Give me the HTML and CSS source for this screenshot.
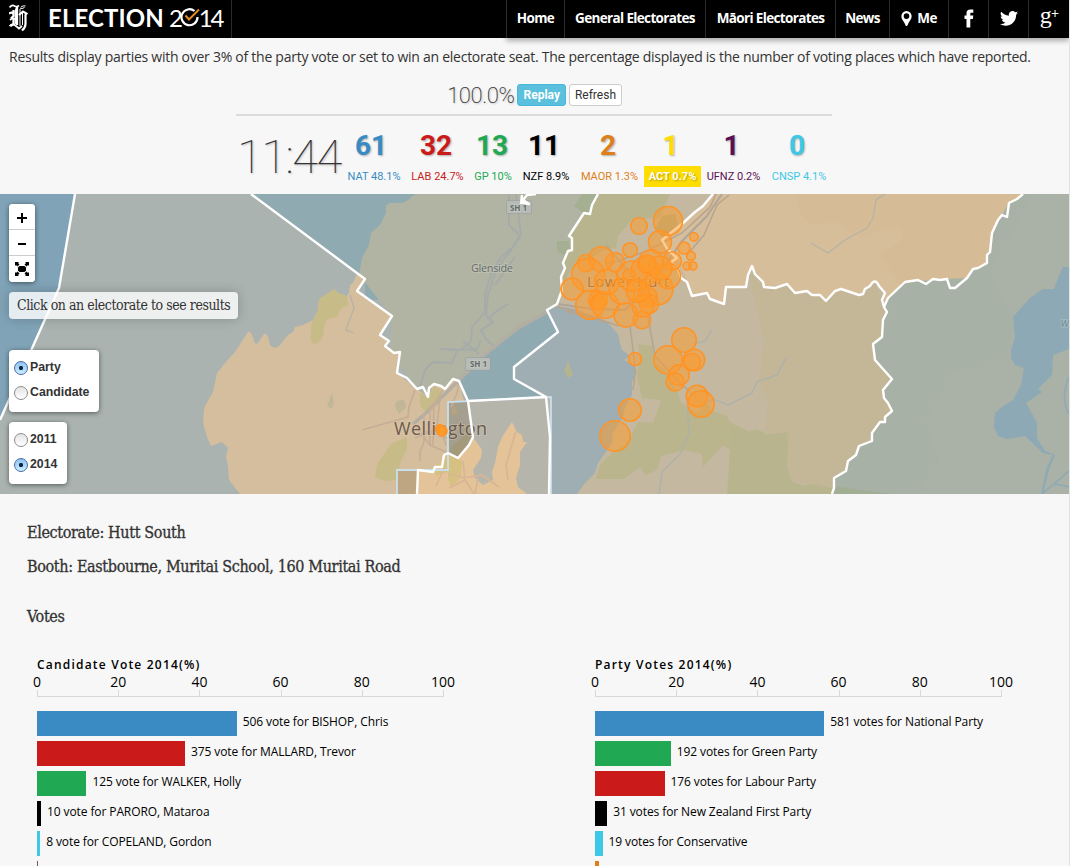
FILE: index.html
```html
<!DOCTYPE html>
<html lang="en">
<head>
<meta charset="utf-8">
<title>Election 2014</title>
<link rel="stylesheet" href="styles.css">
</head>
<body>
<div class="page">
  <header class="topbar">
    <a class="logo">
      <svg width="20" height="28" viewBox="0 0 20 28" fill="none" stroke="#fff">
        <path d="M0.500 3.500 Q3 .5 5.500 2 Q8 3.500 10 1.500 M9.500 1.500 Q6 5 6.500 10 V20" stroke-width="1.700"/>
        <path d="M8 3 V21 M4.500 6 V12 L2 14.500 M0 9.500 Q3 7.500 4.500 10 M4.500 15 V20 L1.500 22" stroke-width="2.300"/>
        <path d="M1 16 Q3.500 13.500 6 15 M.5 22 Q4 19 7 22 L10 24.500 L13 22" stroke-width="1.800"/>
        <path d="M10 11 L14 7.500 L17.500 9.500 L16.500 11 V20 Q16.500 23.500 13 26.500" stroke-width="2.200"/>
        <path d="M11 5 V22 M12 3 Q14 1.200 16.500 2 M11 4 Q12.500 5.500 15.500 3.500 M13.500 9 V21" stroke-width="1"/>
      </svg>
    </a>
    <a class="brand"><span class="brand-word">ELECTION</span><span class="brand-year">2<svg width="21" height="22" viewBox="0 0 21 22" fill="none"><path d="M14.500 4 A8 8 0 1 0 17.500 10" stroke="#fff" stroke-width="2.200"/><path d="M5.500 8.500 L9 12.500 L19 2.500" stroke="#e58a24" stroke-width="2"/></svg>14</span></a>
    <nav class="nav">
      <a class="n-home">Home</a>
      <a class="n-general">General Electorates</a>
      <a class="n-maori">Māori Electorates</a>
      <a class="n-news">News</a>
      <a class="n-me"><svg width="11" height="15" viewBox="0 0 10 14"><path fill="#fff" fill-rule="evenodd" d="M5 0a4.800 4.800 0 0 0-4.800 4.800C.2 7 1.600 8.600 3 11l1.400 3h1.200L7 11c1.400-2.400 2.800-4 2.800-6.200A4.800 4.800 0 0 0 5 0zm0 2.200a2.600 2.600 0 1 1 0 5.200 2.600 2.600 0 0 1 0-5.200z"/></svg>Me</a>
      <a class="n-fb"><svg width="10" height="19" viewBox="0 0 10 19"><path fill="#fff" d="M2.500 18.500V10H.5V6.600h2V4.300C2.500 1.700 3.800.5 6.300.5H9.300v3.300H7.500c-.9 0-1.200.4-1.200 1.200v1.600h3L8.900 10H6.300v8.500z"/></svg></a>
      <a class="n-tw"><svg width="18" height="15" viewBox="0 0 24 20"><path fill="#fff" d="M24 2.400c-.9.400-1.800.7-2.800.8 1-.6 1.800-1.600 2.200-2.700-1 .6-2 1-3.100 1.200A4.900 4.900 0 0 0 11.900 6.200C7.800 6 4.200 4 1.700.9A4.900 4.900 0 0 0 3.200 7.500c-.8 0-1.600-.2-2.200-.6v.1c0 2.400 1.700 4.400 3.900 4.800-.7.200-1.500.2-2.200.1.600 2 2.400 3.400 4.600 3.400A9.900 9.900 0 0 1 0 17.300 14 14 0 0 0 7.500 19.500c9.100 0 14-7.500 14-14v-.6c1-.7 1.800-1.600 2.500-2.500z"/></svg></a>
      <a class="n-gp"><span class="g">g</span><span class="plus">+</span></a>
    </nav>
  </header>

  <p class="intro">Results display parties with over 3% of the party vote or set to win an electorate seat. The percentage displayed is the number of voting places which have reported.</p>

  <section class="summary">
    <div class="progress">
      <span class="percent">100.0%</span>
      <button class="btn primary">Replay</button>
      <button class="btn">Refresh</button>
    </div>
    <div class="results">
      <div class="clock">11:44</div>
      <div class="party nat"><b>61</b><span>NAT 48.1%</span></div>
      <div class="party lab"><b>32</b><span>LAB 24.7%</span></div>
      <div class="party gp"><b>13</b><span>GP 10%</span></div>
      <div class="party nzf"><b>11</b><span>NZF 8.9%</span></div>
      <div class="party maor"><b>2</b><span>MAOR 1.3%</span></div>
      <div class="party act"><b>1</b><span>ACT 0.7%</span></div>
      <div class="party ufnz"><b>1</b><span>UFNZ 0.2%</span></div>
      <div class="party cnsp"><b>0</b><span>CNSP 4.1%</span></div>
    </div>
  </section>

  <section class="map">
    <svg class="map-canvas" width="1069" height="300" viewBox="0 194 1069 300">
      <rect y="194" width="1069" height="300" fill="#aab3b0"/>
      <!-- open sea -->
      <path fill="#80a3b7" d="M0 194H75L59 288L0 420Z"/>
      <path fill="#90aab2" d="M251 194H420V300H365L365 279Z"/>
      <!-- northern suburbs -->
      <path fill="#b1b3a3" d="M359 275L362 258L369 245L371 233L380 225L386 213L386 206Q388 202 397 203T412 196L416 194H600V310L547 310L460 382L453 395L420 395L390 350L392 316Z"/>
      <!-- Wellington west -->
      <path fill="#d4be9e" d="M357 273L353 283L350 285L349 293L347 296L338 293L334 289L328 294L319 299L318 310L313 320L303 325L295 327L293 332L288 335L280 345Q275 350 270 345L268 337Q265 330 262 337L258 343Q255 345 254 341L252 335Q249 328 246 335L235 352L225 363L217 373L213 392L204 408L203 423L207 437L211 446L222 442L228 448L226 457L228 465L229 480L240 494H460L473 437L459 381L453 379L445 389L434 384L428 397L417 389L397 373L400 352L394 353L385 346L389 341L380 335L392 316L357 291L365 279Z"/>
      <path fill="#c7bb88" d="M334 289L338 293L347 296L348 306L341 308L337 317L328 319Q323 324 324 333Q320 344 314 344Q309 341 311 333V325L318 310L319 299Z"/>
      <path fill="#c7bb88" d="M391 444L407 437V449L401 461L396 480L386 481L375 477L377 464Z"/>
      <path fill="#c7bb88" d="M420 393L428 397L434 386L443 391L434 404L425 412L420 405Z"/>
      <path fill="#c1b798" d="M332 393L334 402L332 409L327 406ZM396 402Q406 395 406 407L399 414L395 406Z"/>
      <!-- harbour -->
      <path fill="#90aab2" d="M459 381L465 372L495 348L518 327L547 310L558 332L514 367V379L547 397L468 401Z"/>
      <path fill="#c4b8a0" d="M557 304L562 290L561 277L565 268L563 263L568 251L572 250L569 236L584 213L590 214L592 205L598 194H890V494H551V397L514 379V367L558 332L547 310Z"/>
      <!-- Belmont hills -->
      <path fill="#b8b58e" d="M598 194H670L660 218L632 219L625 228L618 235L616 248L604 250L588 260L575 262L564 283L561 277L565 268L563 263L568 251L572 250L569 236L584 213L590 214L592 205Z"/>
      <path fill="#a5af92" d="M582 194H597L591 212L584 213L574 206ZM557 241H569L571 251L567 252L563 255L557 251ZM662 216L675 214L681 235L665 239L655 230ZM680 222L694 219L693 230L684 234Z"/>
      <path fill="#9faeb2" d="M514 367L558 332L547 310L557 306L575 309L597 318L608 323L618 334L620 343L622 350L630 356L624 360L634 365L637 372L632 382V395L625 407L623 417L613 433L612 443L605 453L598 463L595 473L585 483L577 494H549L551 397L514 379Z"/>
      <path fill="#b5b48f" d="M568 361L573 375L568 378L564 371Z"/>
      <!-- eastern hills -->
      <path fill="#bab58c" d="M638 344L652 346L655 362L666 371L677 391L681 403L698 413L706 400L711 410L727 416L730 422L750 432L766 435L790 432L787 470L794 484L804 487L835 490L832 494H752L729 485L730 450L723 445L703 467L702 454L685 450L661 456L657 470L645 475L640 467L624 479H596L600 465L613 452L628 442L638 422L653 423L661 400L642 398L637 375L640 360Z"/>
      <path fill="#b8b58e" d="M730 424L747 433Q756 425 766 435L790 432L786 455L790 481L804 486L815 483L835 489L832 494H727L730 450Z"/>
      <!-- Upper Hutt -->
      <path fill="#d7be9b" d="M713 194L703 206L683 223L662 240L668 250L677 258L687 282L692 296L707 293L710 299L724 304L726 287H746L752 266L763 282L764 287L775 288L787 284L795 293L807 291L820 295L826 301L835 291L841 289L859 295L865 289L875 282L885 293L884 307L888 298L905 282L918 280L926 284L933 279H947L950 288H955L967 278L973 269L987 263V255L990 252L992 233L998 220L1009 203L1023 194Z"/>
      <path fill="#d5bc93" d="M795 194H1021L1008 203L1004 216L995 225L990 253L981 266L970 272L952 288L920 280L900 286L880 255L904 239L898 225L860 238L835 222L810 225L798 210Z" opacity=".65"/>
      <path fill="#c3b795" d="M748 270L763 287L787 284L795 293L820 295L826 301L841 289L863 294L875 282L884 307L882 337L875 350L890 379L892 411L872 433L846 471L834 488L804 484L790 480L787 432L765 434L768 404L759 383L764 340L757 310Z" opacity=".75"/>
      <!-- Wairarapa -->
      <path fill="#a8b1a6" d="M1023 194H1069V494H832L834 478L846 471L848 461L856 455L859 446L872 441V433L880 422H885V417L892 411L884 398L883 390L892 379L875 360L873 344L882 337L883 320L887 312L884 307L888 298L905 282L947 279L967 278L987 263L992 233L1009 203Z"/>
      <path fill="#abb0a8" d="M1030 194H1069V494H918L938 460L925 420L955 370L1005 365L1015 320L990 270L1015 230Z" opacity=".7"/>
      <path fill="#a1ae94" d="M833 486L892 494H832Z"/>
      <path fill="#8ca9b5" d="M1069 267H1063L1058 278L1054 289H1043L1030 298L1013 317L1015 338L1011 350V358L1015 365L1024 368L1021 385L1013 400L1002 407L995 413L994 427L998 436L1007 439L1025 436L1043 453L1053 455L1047 467L1041 494H1043L1049 469L1055 455L1045 451L1037 438V423L1026 403L1042 392L1038 389L1052 375L1053 355L1069 349Z"/>
      <path d="M1069 471L1042 494M1069 377Q1060 398 1069 414M1055 484L1069 487" stroke="#8ca9b5" stroke-width="1.500" fill="none"/>
      <!-- south Wellington -->
      <path fill="#b5b5ac" d="M468 401L546 397L550 437V494H470Z"/>
      <path fill="#b9b9b4" d="M546 397L551 397V494H549L550 437Z"/>
      <path fill="#e3c397" d="M417 470L433 472L442 467L444 455L458 458L473 437L482 450L481 458L473 470L475 478L483 485L493 480L492 472L495 463L498 447L502 437L512 422L517 432L522 435L523 442L527 442L520 452V465L516 478L518 487L527 494H417Z"/>
      <path fill="#d6c183" d="M448 455L462 461L461 476L452 488L448 480V472L436 476L433 468Z"/>
      <path fill="#a59f8f" d="M448 402L468 401L473 437L469 445L458 458L448 453Z"/>
      <path fill="#a49a7b" d="M467 434L472 437L458 458L449 454L452 446Z"/>
      <path fill="#b6a180" d="M453 401L458 414L451 415Z"/>
      <path fill="#bea682" d="M397 470H418L417 494H397Z"/>
      <!-- highways and streams -->
      <g fill="none" stroke="#a5abaa" stroke-width="1.800">
        <path d="M509 194V225L520 236L512 248L501 257L491 274L485 295V312L472 327L471 341L461 350L440 349"/>
        <path d="M516 194L521 235L511 250L496 270L488 295L486 315L493 322L481 330L486 339L496 349"/>
        <path d="M515 257L495 285M508 304L497 311L487 319M481 340L477 349L457 350L452 363L433 362M463 341L479 354M420 386L425 370L433 362"/>
      </g>
      <path d="M547 312L518 328L490 350L459 380L426 413L413 424" fill="none" stroke="#b3aea3" stroke-width="3.500"/>
      <path d="M443 390L431 410M415 390L409 407L408 417L362 430M424 413V442L420 452V461M434 402L433 445M459 382L457 393L451 407M413 423L430 445L448 453M430 405V446M440 397L436 435M415 438L440 428L446 445M424 431L447 438" fill="none" stroke="#c7ad96" stroke-width="1.700"/>
      <path d="M448 474L464 478L482 475L499 487M463 461L465 480L474 494M449 488L465 480M478 478L475 494M444 468L436 486M516 431L506 465L508 480" fill="none" stroke="#d8b595" stroke-width="1.700"/>
      <path d="M558 304L593 309L625 310L655 280L682 241L706 217L722 194" fill="none" stroke="#afa59a" stroke-width="2"/>
      <path d="M558 307L594 317L618 326M605 265L645 252L682 233L710 207L716 194M687 255L704 235L717 205L729 195M630 326L634 358L635 373L633 390M648 317L655 356L680 383L696 397M566 311L613 324M606 245L640 285" fill="none" stroke="#b7a48f" stroke-width="1.500"/>
      <path d="M712 330L705 341L694 344M786 358L777 375L757 382L752 393L728 405L716 400L704 402M687 400L689 434L681 453L662 472L659 494" fill="none" stroke="#a9b0af" stroke-width="1.200"/>
      <path d="M885 194L876 200L873 218L867 228L845 240L828 253L811 243M350 295L354 308L346 330L354 333" fill="none" stroke="#b7b2a5" stroke-width="1.300"/>
      <!-- place names -->
      <g class="place">
        <text x="471" y="272" font-size="11" textLength="42">Glenside</text>
        <rect x="507" y="201" width="24" height="12" class="shield"/><text x="510" y="211" font-size="8" font-weight="bold" textLength="17">SH 1</text>
        <rect x="466" y="358" width="24" height="12" class="shield"/><text x="470" y="367" font-size="8" font-weight="bold" textLength="17">SH 1</text>
        <text x="394" y="435" font-size="18" textLength="93" class="city">Wellington</text>
        <text x="587" y="287" font-size="15" textLength="82" class="town">Lower Hutt</text>
        <text x="1060.500" y="327" font-size="9.500" font-style="italic" fill="#628ca3">W</text>
      </g>
      <!-- electorate boundaries -->
      <g class="edge-blue">
        <path d="M397 494V470H448V402L551 397V494"/>
      </g>
      <g class="edge">
        <path d="M75 194L59 288L0 420"/>
        <path d="M251 194L365 279L357 291L392 316L380 335L389 341L385 346L394 353L400 352L397 373L407 378L417 389L423 387L428 397L429 388L434 384L441 386L445 389L453 379L459 381L468 401L473 437L469 445L458 458L448 453L444 455L442 467H435L433 472L418 470L417 494"/>
        <path d="M468 401L546 397L514 379V367L558 332L547 310L557 304L562 290L561 277L565 268L563 263L568 251L572 250V238L569 236L584 213L590 214L592 205L598 194"/>
        <path d="M546 397L550 437L549 494M520 202L529 204L523 200L527 195L536 194M521 204L522 195"/>
        <path d="M713 194L703 206L695 212L683 223L662 240L668 250M668 250L677 258L670 263L678 268L681 278L687 282L692 296L707 293L710 299L724 304L726 287H746L748 275L752 266L755 274L763 282L764 287L775 288L787 284L795 293L807 291L812 295H820L826 301L835 291L841 289L859 295L863 294L865 289L870 286Q875 277 879 286L885 293L882 300L884 307L887 312L883 320L882 337L873 344L875 360L883 369L892 379L883 390L884 398L888 403L892 411L885 417V422H880L872 433V441L859 446L856 455L848 461L846 471L834 478V488L832 494"/>
        <path d="M884 307L888 298L905 282L918 280L926 284L933 279L940 280L947 279L950 288H955L967 278L973 269L978 268L987 263V255L990 252L992 233L998 220L1002 215L1007 217L1009 203L1017 199L1023 194"/>
      </g>
      <g class="booths">
        <circle cx="668" cy="221" r="14.500"/><circle cx="639" cy="226" r="8.300"/><circle cx="660" cy="242" r="11.500"/><circle cx="630" cy="250" r="7.300"/>
        <circle cx="694" cy="237" r="4.200"/><circle cx="684" cy="248" r="6"/><circle cx="691" cy="256" r="4.400"/><circle cx="687" cy="266" r="4"/><circle cx="693" cy="266" r="4"/>
        <circle cx="672" cy="261" r="9.300"/><circle cx="615" cy="262" r="9.500"/><circle cx="601" cy="259" r="12.300"/><circle cx="586" cy="263" r="8.500"/><circle cx="588" cy="275" r="16.500"/>
        <circle cx="572" cy="289" r="11"/><circle cx="590" cy="305" r="14.300"/><circle cx="598" cy="300" r="9.500"/><circle cx="598" cy="302" r="7.500"/><circle cx="605" cy="305" r="13.300"/>
        <circle cx="607" cy="282" r="12.500"/><circle cx="626" cy="315" r="12"/><circle cx="642" cy="320" r="8.700"/><circle cx="622" cy="291" r="13"/><circle cx="632" cy="276" r="15"/>
        <circle cx="651" cy="262" r="12.300"/><circle cx="645" cy="271" r="14"/><circle cx="657" cy="289" r="16"/><circle cx="668" cy="276" r="12.500"/><circle cx="647" cy="297" r="10"/>
        <circle cx="649" cy="304" r="9.500"/><circle cx="643" cy="306" r="11"/><circle cx="638" cy="291" r="11.500"/><circle cx="660" cy="268" r="12"/><circle cx="647" cy="264" r="9"/><circle cx="629" cy="275" r="6"/>
        <circle cx="684" cy="340" r="12.300"/><circle cx="668" cy="360" r="14.200"/><circle cx="694" cy="360" r="10.700"/><circle cx="692" cy="362" r="8.500"/><circle cx="679" cy="375" r="10.300"/><circle cx="675" cy="382" r="9"/>
        <circle cx="635" cy="359" r="6.500"/><circle cx="630" cy="410" r="11.200"/><circle cx="615" cy="436" r="15.200"/><circle cx="697" cy="396" r="10.700"/><circle cx="701" cy="404" r="13.200"/>
        <circle cx="440" cy="429" r="4.500" class="solid"/><circle cx="442" cy="431" r="5" class="solid"/>
      </g>
    </svg>
    <div class="zoom">
      <button><svg width="12" height="12" viewBox="0 0 12 12"><path d="M6 2V12M1 7H11" stroke="#000" stroke-width="2"/></svg></button>
      <button><svg width="12" height="12" viewBox="0 0 12 12"><path d="M2 7H10" stroke="#000" stroke-width="2"/></svg></button>
      <button><svg width="14" height="14" viewBox="0 0 14 14"><path d="M0 0H4L3 1L4.500 2.500L2.500 4.500L1 3L0 4ZM14 0H10L11 1L9.500 2.500L11.500 4.500L13 3L14 4ZM0 14H4L3 13L4.500 11.500L2.500 9.500L1 11L0 10ZM14 14H10L11 13L9.500 11.500L11.500 9.500L13 11L14 10Z"/><path d="M4.500 4H9.500L11 5.500V8.500L9.500 10H4.500L3 8.500V5.500Z"/></svg></button>
    </div>
    <div class="hint">Click on an electorate to see results</div>
    <div class="switch vote"><label><i class="radio on"></i>Party</label><label><i class="radio"></i>Candidate</label></div>
    <div class="switch year"><label><i class="radio"></i>2011</label><label><i class="radio on"></i>2014</label></div>
  </section>

  <section class="details">
    <h3 class="h-electorate">Electorate: Hutt South</h3>
    <h3 class="h-booth">Booth: Eastbourne, Muritai School, 160 Muritai Road</h3>
    <h3 class="h-votes">Votes</h3>
    <div class="charts">
      <div class="chart">
        <h4>Candidate Vote 2014(%)</h4>
        <div class="scale"><span>0</span><span>20</span><span>40</span><span>60</span><span>80</span><span>100</span></div>
        <div class="ticks"><i></i><i></i><i></i><i></i><i></i></div>
        <div class="row"><i class="bar c-nat" style="width:199.700px"></i>506 vote for BISHOP, Chris</div>
        <div class="row"><i class="bar c-lab" style="width:148px"></i>375 vote for MALLARD, Trevor</div>
        <div class="row"><i class="bar c-gp" style="width:49.400px"></i>125 vote for WALKER, Holly</div>
        <div class="row"><i class="bar c-nzf" style="width:4px"></i>10 vote for PARORO, Mataroa</div>
        <div class="row"><i class="bar c-cnsp" style="width:3.200px"></i>8 vote for COPELAND, Gordon</div>
        <div class="row"><i class="bar c-ufnz" style="width:1px"></i></div>
      </div>
      <div class="chart">
        <h4>Party Votes 2014(%)</h4>
        <div class="scale"><span>0</span><span>20</span><span>40</span><span>60</span><span>80</span><span>100</span></div>
        <div class="ticks"><i></i><i></i><i></i><i></i><i></i></div>
        <div class="row"><i class="bar c-nat" style="width:229.300px"></i>581 votes for National Party</div>
        <div class="row"><i class="bar c-gp" style="width:75.800px"></i>192 votes for Green Party</div>
        <div class="row"><i class="bar c-lab" style="width:69.500px"></i>176 votes for Labour Party</div>
        <div class="row"><i class="bar c-nzf" style="width:12.200px"></i>31 votes for New Zealand First Party</div>
        <div class="row"><i class="bar c-cnsp" style="width:7.500px"></i>19 votes for Conservative</div>
        <div class="row"><i class="bar c-maor" style="width:4px"></i></div>
      </div>
    </div>
  </section>
</div>
</body>
</html>
```
FILE: styles.css
```css
* { box-sizing: border-box; }
body { margin: 0; background: #f7f7f7; color: #333; font-family: "Open Sans", "Noto Sans", sans-serif; }
.page { width: 1070px; height: 866px; overflow: hidden; border-right: 1px solid #e2e2e2; }

.topbar { display: flex; height: 38px; background: #000; }
.logo { width: 40px; padding: 4px 0 0 9px; border-right: 1px solid #2b2b2b; }
.brand { display: flex; width: 192px; padding-left: 8px; border-right: 1px solid #2b2b2b; color: #fff; font: 700 24px/36px Lato, sans-serif; white-space: nowrap; }
.brand-word { width: 121px; letter-spacing: 0.1px; }
.brand-year { display: flex; font-weight: 400; letter-spacing: -2.2px; }
.brand-year svg { margin: 7px -2px 0 -1px; }
.nav { display: flex; margin-left: auto; box-shadow: 0 3px 5px rgba(0,0,0,.3); background: #000; }
.nav a { display: flex; align-items: center; justify-content: center; border-left: 1px solid #2b2b2b; color: #fff; font: 700 13.500px/36px "Open Sans", sans-serif; letter-spacing: -0.65px; padding-bottom: 2px; white-space: nowrap; }
.n-home { width: 58px; }
.n-general { width: 141px; }
.n-maori { width: 130px; }
.n-news { width: 54px; }
.n-me { width: 59px; gap: 5px; }
.n-fb { width: 40px; }
.n-tw { width: 40px; }
.n-gp { width: 41px; }
.nav .g { font: 400 24px/30px "Liberation Serif", serif; margin-top: -6px; }
.nav .plus { font: 400 14px/14px "Open Sans", sans-serif; margin-top: -8px; }

.intro { margin: 0; padding: 10px 0 0 9px; height: 46px; font-size: 14px; line-height: 18px; letter-spacing: -0.263px; white-space: nowrap; }

.summary { width: 596px; margin-left: 236px; height: 110px; }
.progress { display: flex; height: 32px; border-bottom: 2px solid #dcdcdc; padding-right: 210px; justify-content: flex-end; gap: 3px; align-items: flex-start; }
.percent { font: 200 22px/24px Roboto, sans-serif; text-shadow: 1px 1px 2px rgba(0,0,0,.25); letter-spacing: -0.4px; }
.btn { height: 22px; padding: 0 5px; border: 1px solid #ccc; border-radius: 3px; background: #fff; color: #333; font: 400 12px/20px Roboto, sans-serif; }
.btn.primary { background: #5bc0de; border-color: #46b8da; color: #fff; font-weight: 700; }
.results { display: flex; padding: 12px 0 0 3px; font-family: Roboto, sans-serif; }
.clock { width: 105px; margin: 2px 0 0 -2px; font: 100 47px/54px Roboto, sans-serif; letter-spacing: -1.5px; text-shadow: 1px 1px 2px rgba(0,0,0,.25); white-space: nowrap; }
.party { display: flex; flex-direction: column; align-items: center; }
.party b { font-size: 28px; line-height: 35px; margin-bottom: 3px; text-shadow: 1px 1px 2px rgba(0,0,0,.3); }
.party span { width: 100%; text-align: center; font-size: 11px; line-height: 21px; white-space: nowrap; }
.nat { width: 64px; color: #3a8bc4; } .nat b { margin-left: -6px; }
.lab { width: 63px; color: #ca1a1a; } .lab b { margin-left: -3px; }
.gp { width: 48px; color: #20a952; } .gp b { margin-left: -2px; }
.nzf { width: 58px; color: #000; } .nzf b { margin-left: -4px; }
.maor { width: 69px; color: #dd7f1b; } .maor b { margin-left: -3px; }
.act { width: 57px; color: #ffdd00; } .act b { margin-left: -4px; }
.act span { background: #ffdd00; color: #fff; font-weight: 700; text-shadow: 1px 1px 2px rgba(0,0,0,.3); }
.ufnz { width: 65px; color: #5a1154; } .ufnz b { margin-left: -4px; }
.cnsp { width: 66px; color: #3dc9e6; } .cnsp b { margin-left: -4px; }

.map { position: relative; height: 300px; overflow: hidden; }
.map-canvas { display: block; }
.edge path { fill: none; stroke: #fff; stroke-width: 2.400; stroke-linejoin: round; }
.edge-blue path { fill: none; stroke: #c9dfeb; stroke-width: 1.800; }
.booths circle { fill: #ff9a26; fill-opacity: .5; stroke: #ff9426; stroke-width: 1.600; }
.booths .solid { fill-opacity: .9; }
.place { font-family: "Open Sans", sans-serif; fill: #626c6c; paint-order: stroke; stroke: rgba(220,215,200,.35); stroke-width: 2px; }
.place .city, .place .town { fill: #6e5947; font-weight: 500; }
.place .shield { fill: #b6bbb7; stroke: #949e9d; stroke-width: 1px; }
.zoom, .hint, .switch { position: absolute; left: 9px; background: #fff; border-radius: 4px; box-shadow: 0 1px 5px rgba(0,0,0,.5); }
.zoom { top: 10px; width: 26px; height: 78px; overflow: hidden; }
.zoom button { display: flex; align-items: center; justify-content: center; width: 26px; height: 26px; padding: 0; border: 0; border-bottom: 1px solid #ccc; background: #fff; }
.zoom button:last-child { border: 0; }
.hint { top: 98px; width: 229px; height: 27px; padding-left: 8px; background: rgba(255,255,255,.8); box-shadow: 0 0 12px rgba(0,0,0,.2); font: 14px/26px "DejaVu Serif Condensed", "DejaVu Serif", serif; font-stretch: condensed; letter-spacing: -0.45px; white-space: nowrap; }
.switch { padding: 5px 0 0 5px; font: 700 12.300px/25px "Liberation Sans", Arial, sans-serif; }
.switch label { display: flex; align-items: center; gap: 2px; height: 25px; }
.vote { top: 156px; width: 90px; height: 62px; }
.year { top: 228px; width: 58px; height: 62px; }
.radio { width: 14px; height: 14px; border-radius: 50%; border: 1px solid #8d8d8d; background: linear-gradient(#e4e4e4, #fff); }
.radio.on { border-color: #4a6ba8; background: radial-gradient(circle, #10254a 0 1.800px, transparent 2.500px), linear-gradient(#8fc1f3, #c9efff); }

.details { padding-left: 27px; }
.details h3 { margin: 0; font: 400 16px/20px "DejaVu Serif Condensed", "DejaVu Serif", serif; font-stretch: condensed; letter-spacing: -0.35px; -webkit-text-stroke: .3px #333; white-space: nowrap; }
.details .h-electorate { margin-top: 29px; }
.details .h-booth { margin-top: 14px; }
.details .h-votes { margin-top: 30px; }
.charts { display: grid; grid-template-columns: 406px 406px; column-gap: 152px; padding: 28px 0 0 10px; color: #000; }
.chart h4 { margin: 0 0 -1px; font-size: 12px; line-height: 20px; font-weight: 600; letter-spacing: 1.200px; }
.scale { display: flex; justify-content: space-between; height: 16px; font-size: 14px; line-height: 16px; }
.scale span { display: flex; justify-content: center; width: 0; }
.ticks { display: flex; height: 7px; border: 1px solid #d8d8d8; border-top: 0; width: 407px; margin-bottom: 14px; }
.ticks i { flex: 1; border-right: 1px solid #d8d8d8; }
.ticks i:last-child { border: 0; }
.row { display: flex; gap: 6px; height: 30px; font-size: 12px; line-height: 21px; letter-spacing: -0.1px; white-space: nowrap; }
.bar { height: 25px; flex: none; }
.c-nat { background: #3a8bc4; }
.c-lab { background: #ca1a1a; }
.c-gp { background: #20a952; }
.c-nzf { background: #000; }
.c-cnsp { background: #3dc9e6; }
.c-ufnz { background: #7a4a80; }
.c-maor { background: #dd7f1b; }
```
